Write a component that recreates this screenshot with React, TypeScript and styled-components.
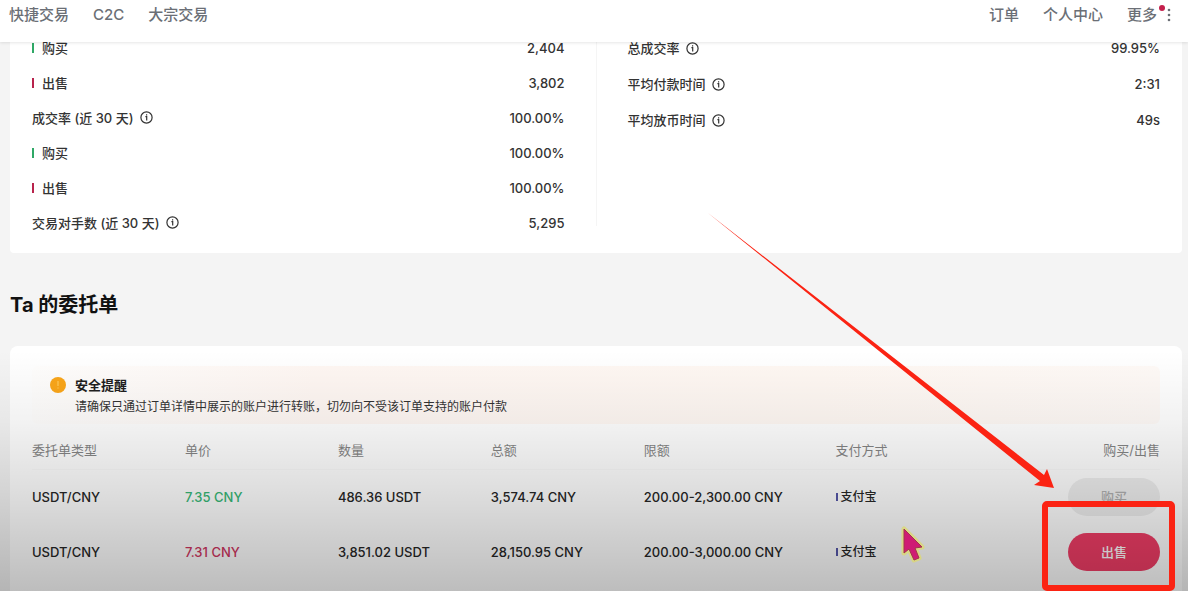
import React from "react";
import styled, { createGlobalStyle } from "styled-components";

const GlobalStyle = createGlobalStyle`
  * { box-sizing: border-box; }
  html, body, #root { height: 100%; }
  body {
    margin: 0;
    overflow: hidden;
    background: #f4f4f4;
    color: #333;
    font-family: Inter, "Noto Sans CJK SC", sans-serif;
    font-size: 13px;
    line-height: 20px;
  }
`;

const Page = styled.div`
  position: relative;
  height: 100%;
  overflow: hidden;
`;

const Header = styled.header`
  position: relative;
  z-index: 2;
  display: flex;
  justify-content: space-between;
  height: 42px;
  padding: 5px 17px 0 9px;
  background: #fff;
  box-shadow: 0 1px 3px rgba(0, 0, 0, 0.1);
`;

const Nav = styled.nav`
  display: flex;
  gap: 24px;
  height: 20px;
`;

const NavLink = styled.a`
  color: #6b6f76;
  font-size: 15px;
  font-weight: 500;
  text-decoration: none;
  white-space: nowrap;
`;

const MoreButton = styled.button`
  position: relative;
  display: flex;
  align-items: center;
  gap: 10px;
  padding: 0;
  border: 0;
  background: none;
  color: #6b6f76;
  font: inherit;
  font-size: 15px;
  font-weight: 500;
`;

const Dot = styled.span`
  position: absolute;
  top: 0;
  right: 6px;
  width: 6px;
  height: 6px;
  border-radius: 50%;
  background: #c4204c;
`;

const Main = styled.main`
  margin: -12px 6px 0 10px;
`;

const StatsCard = styled.section`
  display: grid;
  grid-template-columns: 1fr 1px 1fr;
  gap: 31px;
  padding: 0 22px 13px;
  border-radius: 0 0 4px 4px;
  background: #fff;
`;

const Divider = styled.div`
  margin-bottom: 14px;
  background: #f5f5f5;
`;

const StatList = styled.dl`
  margin: 0;
`;

const StatRow = styled.div<{ $tall?: boolean }>`
  display: flex;
  align-items: center;
  justify-content: space-between;
  height: ${(p) => (p.$tall ? 36 : 35)}px;
`;

const StatLabel = styled.dt`
  display: flex;
  align-items: center;
  gap: 6px;
  font-weight: 500;
`;

const StatValue = styled.dd`
  margin: 0;
  font-weight: 500;
`;

const Bar = styled.i<{ $color: string }>`
  width: 2px;
  height: 10px;
  margin-right: 2px;
  background: ${(p) => p.$color};
`;

const Title = styled.h2`
  margin: 38px 0 27px;
  color: #111;
  font-size: 20px;
  font-weight: 700;
  line-height: 28px;
`;

const OrdersCard = styled.section`
  min-height: 300px;
  padding: 20px 22px;
  border-radius: 8px;
  background: #fff;
`;

const Notice = styled.div`
  display: flex;
  gap: 9px;
  padding: 9px 18px;
  border-radius: 6px;
  background: linear-gradient(90deg, #fffefd, #fff7f3 25%, #fff8f3 70%, #fffaf7);
`;

const NoticeTitle = styled.strong`
  display: block;
  color: #1f1f1f;
  font-size: 13px;
  font-weight: 700;
`;

const NoticeText = styled.p`
  margin: 4px 0 0;
  font-size: 12px;
  line-height: 16px;
`;

const Table = styled.table`
  width: 100%;
  margin-top: 7px;
  border-collapse: collapse;
  table-layout: fixed;
`;

const HeadCell = styled.th<{ $width?: string; $right?: boolean }>`
  width: ${(p) => p.$width ?? "auto"};
  height: 38px;
  padding: 0;
  border-bottom: 1px solid #fafafa;
  color: #858585;
  font-weight: 400;
  text-align: ${(p) => (p.$right ? "right" : "left")};
`;

const Cell = styled.td<{ $color?: string; $right?: boolean }>`
  height: 55px;
  padding: 0;
  color: ${(p) => p.$color ?? "#262626"};
  font-weight: 500;
  text-align: ${(p) => (p.$right ? "right" : "left")};
  white-space: nowrap;
`;

const Payment = styled.span`
  display: flex;
  align-items: center;
  gap: 1px;
  font-size: 12px;
`;

const PaymentBar = styled(Bar)`
  height: 8px;
`;

const TradeButton = styled.button<{ $sell?: boolean }>`
  width: 92px;
  height: 38px;
  border: 0;
  border-radius: 19px;
  background: ${(p) => (p.$sell ? "#f03d66" : "#efefef")};
  color: ${(p) => (p.$sell ? "#fff" : "#b0b0b0")};
  font: inherit;
  font-weight: 500;
  vertical-align: middle;
`;

const Shade = styled.div`
  position: absolute;
  inset: auto 0 0;
  height: 241px;
  background: linear-gradient(
    rgba(0, 0, 0, 0),
    rgba(0, 0, 0, 0.05) 30%,
    rgba(0, 0, 0, 0.13) 58%,
    rgba(0, 0, 0, 0.26)
  );
  pointer-events: none;
`;

const Annotation = styled.svg`
  position: absolute;
  top: 0;
  right: 0;
  z-index: 3;
  pointer-events: none;
`;

const InfoIcon = () => (
  <svg width="13" height="13" viewBox="0 0 13 13" fill="none" stroke="#333" strokeWidth="1.2" aria-hidden="true">
    <circle cx="6.5" cy="6.5" r="5.6" />
    <path d="M5.4 5.7h1.3v3.8M6.6 3.3v1.2" />
  </svg>
);

const GREEN = "#2fa866";
const RED = "#b8234c";

const leftStats = [
  { label: "购买", value: "2,404", bar: GREEN },
  { label: "出售", value: "3,802", bar: RED },
  { label: "成交率 (近 30 天)", value: "100.00%" },
  { label: "购买", value: "100.00%", bar: GREEN },
  { label: "出售", value: "100.00%", bar: RED },
  { label: "交易对手数 (近 30 天)", value: "5,295" },
];

const rightStats = [
  { label: "总成交率", value: "99.95%" },
  { label: "平均付款时间", value: "2:31" },
  { label: "平均放币时间", value: "49s" },
];

const columns = [
  { label: "委托单类型", width: "13.56%" },
  { label: "单价", width: "13.56%" },
  { label: "数量", width: "13.56%" },
  { label: "总额", width: "13.56%" },
  { label: "限额", width: "17%" },
  { label: "支付方式" },
  { label: "购买/出售", right: true },
];

const orders = [
  { price: "7.35 CNY", amount: "486.36 USDT", total: "3,574.74 CNY", limit: "200.00-2,300.00 CNY", sell: false },
  { price: "7.31 CNY", amount: "3,851.02 USDT", total: "28,150.95 CNY", limit: "200.00-3,000.00 CNY", sell: true },
];

type Stat = { label: string; value: string; bar?: string };

const Stats = ({ items, tall }: { items: Stat[]; tall?: boolean }) => (
  <StatList>
    {items.map((s, i) => (
      <StatRow key={i} $tall={tall}>
        <StatLabel>
          {s.bar && <Bar $color={s.bar} />}
          {s.label}
          {!s.bar && <InfoIcon />}
        </StatLabel>
        <StatValue>{s.value}</StatValue>
      </StatRow>
    ))}
  </StatList>
);

export default function App() {
  return (
    <Page>
      <GlobalStyle />
      <Header>
        <Nav>
          <NavLink href="#quick">快捷交易</NavLink>
          <NavLink href="#c2c">C2C</NavLink>
          <NavLink href="#block">大宗交易</NavLink>
        </Nav>
        <Nav>
          <NavLink href="#orders">订单</NavLink>
          <NavLink href="#profile">个人中心</NavLink>
          <MoreButton type="button">
            更多
            <Dot />
            <svg width="4" height="14" viewBox="0 0 4 14" fill="#6b6f76" aria-hidden="true">
              <circle cx="2" cy="2" r="1.3" />
              <circle cx="2" cy="7" r="1.3" />
              <circle cx="2" cy="12" r="1.3" />
            </svg>
          </MoreButton>
        </Nav>
      </Header>
      <Main>
        <StatsCard>
          <Stats items={leftStats} />
          <Divider />
          <Stats items={rightStats} tall />
        </StatsCard>
        <Title>Ta 的委托单</Title>
        <OrdersCard>
          <Notice>
            <svg width="16" height="18" viewBox="0 0 16 18" aria-hidden="true">
              <circle cx="8" cy="10" r="8" fill="#faa61a" />
              <path d="M8 6v5M8 12.500v1" stroke="#ffc552" strokeWidth="1.400" />
            </svg>
            <div>
              <NoticeTitle>安全提醒</NoticeTitle>
              <NoticeText>请确保只通过订单详情中展示的账户进行转账，切勿向不受该订单支持的账户付款</NoticeText>
            </div>
          </Notice>
          <Table>
            <thead>
              <tr>
                {columns.map((c) => (
                  <HeadCell key={c.label} $width={c.width} $right={c.right}>
                    {c.label}
                  </HeadCell>
                ))}
              </tr>
            </thead>
            <tbody>
              {orders.map((o) => (
                <tr key={o.price}>
                  <Cell>USDT/CNY</Cell>
                  <Cell $color={o.sell ? "#cf3560" : "#38b877"}>{o.price}</Cell>
                  <Cell>{o.amount}</Cell>
                  <Cell>{o.total}</Cell>
                  <Cell>{o.limit}</Cell>
                  <Cell>
                    <Payment>
                      <PaymentBar $color="#5557a8" />
                      支付宝
                    </Payment>
                  </Cell>
                  <Cell $right>
                    <TradeButton type="button" $sell={o.sell}>
                      {o.sell ? "出售" : "购买"}
                    </TradeButton>
                  </Cell>
                </tr>
              ))}
            </tbody>
          </Table>
        </OrdersCard>
      </Main>
      <Shade />
      <Annotation width="1188" height="591" viewBox="0 0 1188 591" aria-hidden="true">
        <path d="M708 213L1044 475L1047 469L1054 488L1034 485L1040 481Z" fill="#fb2313" />
        <rect x="1045" y="504" width="127" height="84" rx="2" fill="none" stroke="#fb2313" strokeWidth="6" />
        <path
          d="M904 529V553L909 549L914 560L919 558L915 548L922 547Z"
          fill="none"
          stroke="#dcd873"
          strokeWidth="5"
          strokeLinejoin="round"
          opacity="0.8"
        />
        <path
          d="M904 529V553L909 549L914 560L919 558L915 548L922 547Z"
          fill="#cf1c74"
          stroke="#a3344a"
          strokeWidth="1"
        />
      </Annotation>
    </Page>
  );
}
